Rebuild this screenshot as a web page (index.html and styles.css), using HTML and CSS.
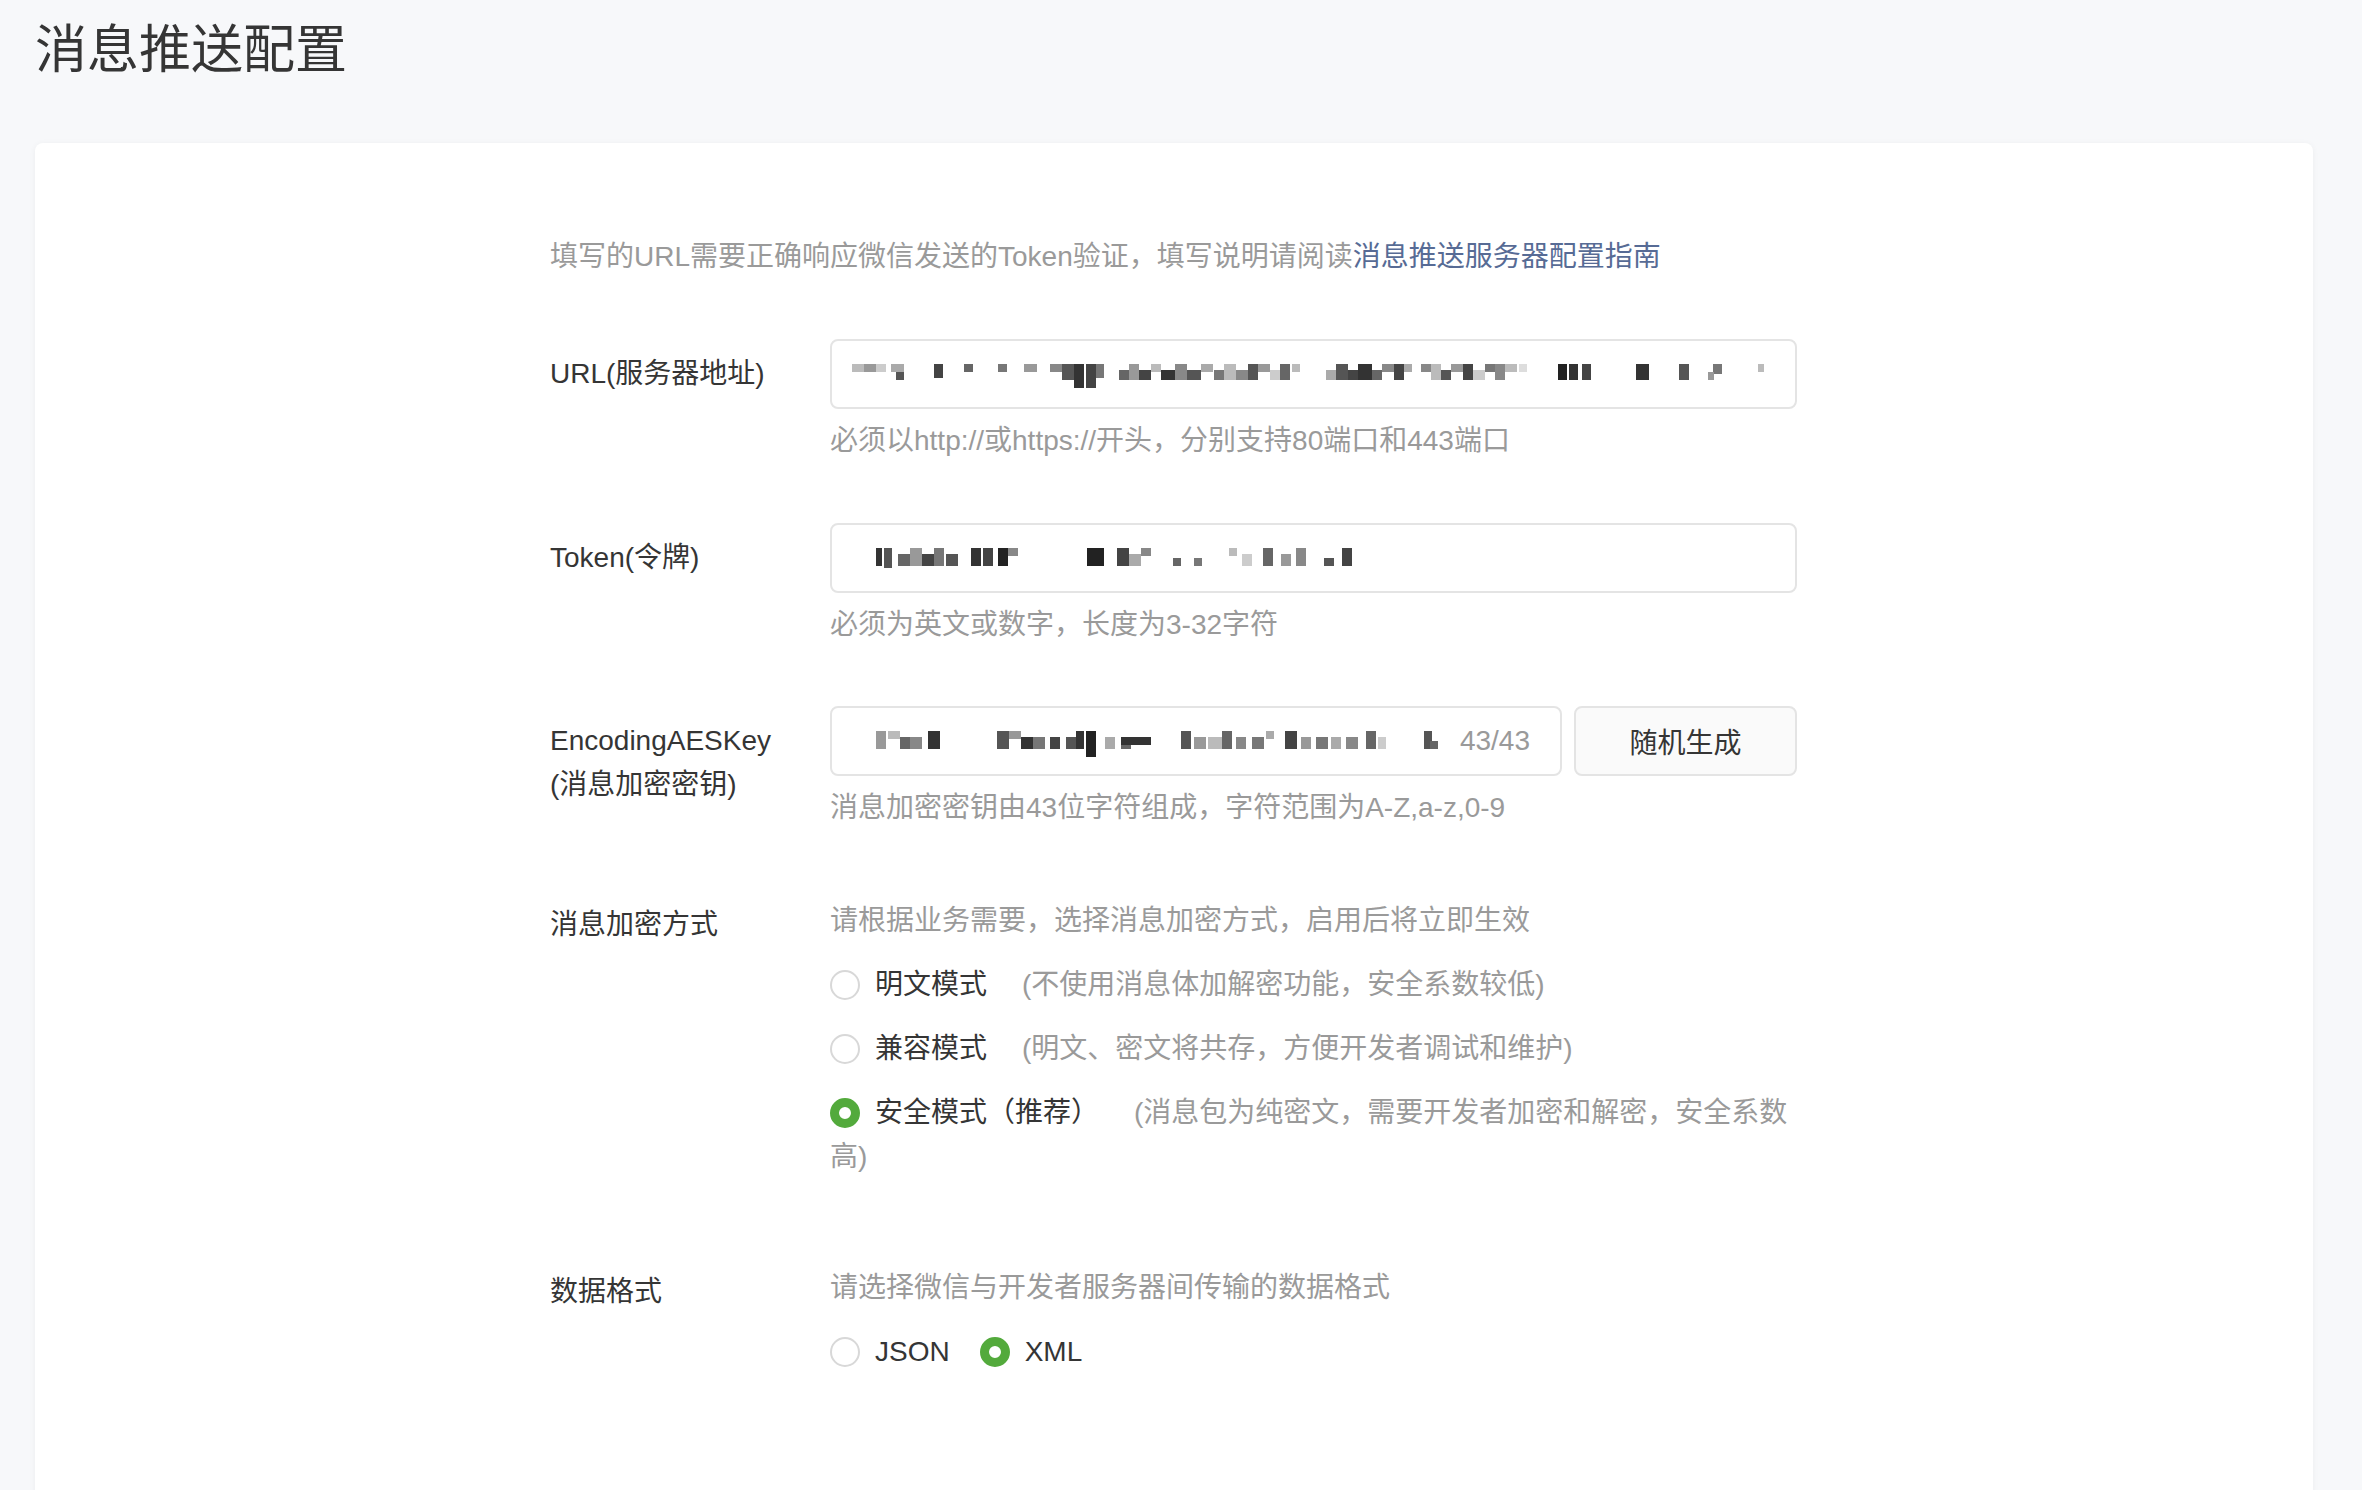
FILE: index.html
```html
<!DOCTYPE html>
<html lang="zh-CN">
<head>
<meta charset="utf-8">
<title>消息推送配置</title>
<link rel="stylesheet" href="styles.css">
</head>
<body>
<div class="page">
  <h1 class="page-title">消息推送配置</h1>
  <div class="card">
    <div class="form">
      <p class="intro">填写的URL需要正确响应微信发送的Token验证，填写说明请阅读<a class="link" href="#">消息推送服务器配置指南</a></p>

      <div class="row row-url">
        <div class="label">URL(服务器地址)</div>
        <div class="field">
          <div class="input">
            <svg class="mosaic mosaic-url" width="913" height="32" viewBox="0 0 913 32">
              <rect x="0" y="6" width="12" height="8" fill="#bbb"/><rect x="12" y="6" width="12" height="8" fill="#999"/><rect x="24" y="6" width="10" height="8" fill="#ccc"/>
              <rect x="39" y="6" width="13" height="8" fill="#aaa"/><rect x="44" y="14" width="8" height="8" fill="#555"/>
              <rect x="82" y="6" width="9" height="14" fill="#444"/><rect x="112" y="6" width="9" height="8" fill="#666"/><rect x="146" y="6" width="9" height="8" fill="#777"/><rect x="172" y="6" width="13" height="8" fill="#999"/>
              <rect x="198" y="6" width="12" height="8" fill="#888"/><rect x="210" y="6" width="12" height="16" fill="#555"/><rect x="222" y="6" width="10" height="24" fill="#333"/><rect x="234" y="6" width="10" height="24" fill="#444"/><rect x="244" y="6" width="8" height="14" fill="#777"/>
              <rect x="267" y="12" width="10" height="10" fill="#666"/><rect x="277" y="6" width="10" height="16" fill="#999"/><rect x="287" y="12" width="12" height="10" fill="#444"/><rect x="299" y="6" width="10" height="8" fill="#bbb"/><rect x="309" y="12" width="14" height="10" fill="#333"/><rect x="323" y="6" width="12" height="16" fill="#888"/><rect x="335" y="12" width="14" height="10" fill="#555"/><rect x="349" y="6" width="12" height="8" fill="#aaa"/>
              <rect x="362" y="12" width="10" height="10" fill="#777"/><rect x="372" y="6" width="12" height="16" fill="#bbb"/><rect x="384" y="12" width="12" height="10" fill="#888"/><rect x="396" y="6" width="10" height="16" fill="#555"/><rect x="406" y="6" width="12" height="8" fill="#999"/><rect x="418" y="12" width="10" height="10" fill="#ccc"/><rect x="428" y="6" width="10" height="16" fill="#666"/><rect x="440" y="6" width="8" height="8" fill="#bbb"/>
              <rect x="474" y="12" width="10" height="10" fill="#aaa"/><rect x="484" y="6" width="12" height="16" fill="#555"/><rect x="496" y="12" width="10" height="10" fill="#444"/><rect x="506" y="6" width="14" height="16" fill="#333"/><rect x="520" y="12" width="10" height="10" fill="#666"/><rect x="530" y="6" width="12" height="8" fill="#888"/><rect x="542" y="6" width="10" height="16" fill="#444"/><rect x="552" y="6" width="8" height="8" fill="#aaa"/>
              <rect x="569" y="6" width="10" height="8" fill="#888"/><rect x="579" y="6" width="10" height="16" fill="#bbb"/><rect x="589" y="12" width="10" height="10" fill="#555"/><rect x="599" y="6" width="12" height="8" fill="#999"/><rect x="611" y="6" width="10" height="16" fill="#444"/><rect x="621" y="12" width="12" height="10" fill="#ccc"/><rect x="633" y="6" width="10" height="8" fill="#777"/><rect x="643" y="6" width="10" height="16" fill="#888"/><rect x="653" y="6" width="12" height="8" fill="#bbb"/><rect x="667" y="6" width="8" height="8" fill="#ddd"/>
              <rect x="706" y="6" width="9" height="16" fill="#222"/><rect x="717" y="6" width="9" height="16" fill="#333"/><rect x="730" y="6" width="9" height="16" fill="#444"/>
              <rect x="784" y="6" width="13" height="16" fill="#333"/><rect x="827" y="6" width="10" height="16" fill="#555"/>
              <rect x="861" y="6" width="9" height="10" fill="#777"/><rect x="856" y="14" width="6" height="8" fill="#999"/><rect x="906" y="6" width="6" height="8" fill="#bbb"/>
            </svg>
          </div>
          <p class="tip">必须以http://或https://开头，分别支持80端口和443端口</p>
        </div>
      </div>

      <div class="row row-token">
        <div class="label">Token(令牌)</div>
        <div class="field">
          <div class="input input-indent">
            <svg class="mosaic" width="484" height="32" viewBox="0 0 484 32">
              <rect x="0" y="6" width="6" height="18" fill="#333"/><rect x="8" y="6" width="8" height="20" fill="#555"/>
              <rect x="22" y="12" width="12" height="12" fill="#666"/><rect x="34" y="6" width="12" height="18" fill="#999"/><rect x="46" y="12" width="12" height="12" fill="#444"/><rect x="58" y="6" width="10" height="18" fill="#777"/><rect x="70" y="12" width="12" height="12" fill="#555"/>
              <rect x="95" y="6" width="10" height="18" fill="#333"/><rect x="107" y="6" width="10" height="18" fill="#444"/><rect x="122" y="6" width="10" height="18" fill="#222"/><rect x="132" y="6" width="10" height="8" fill="#888"/>
              <rect x="211" y="6" width="17" height="18" fill="#222"/>
              <rect x="241" y="6" width="12" height="18" fill="#444"/><rect x="253" y="12" width="12" height="12" fill="#aaa"/><rect x="265" y="6" width="10" height="8" fill="#888"/>
              <rect x="297" y="16" width="8" height="8" fill="#666"/><rect x="318" y="16" width="8" height="8" fill="#777"/>
              <rect x="353" y="6" width="8" height="8" fill="#bbb"/><rect x="366" y="12" width="10" height="12" fill="#ccc"/>
              <rect x="387" y="6" width="10" height="18" fill="#666"/><rect x="405" y="12" width="10" height="12" fill="#999"/><rect x="420" y="6" width="10" height="18" fill="#888"/>
              <rect x="448" y="16" width="10" height="8" fill="#555"/><rect x="466" y="6" width="10" height="18" fill="#444"/>
            </svg>
          </div>
          <p class="tip">必须为英文或数字，长度为3-32字符</p>
        </div>
      </div>

      <div class="row row-aes">
        <div class="label label-two">
          <span class="label-line">EncodingAESKey</span>
          <span class="label-line">(消息加密密钥)</span>
        </div>
        <div class="field">
          <div class="input-group">
            <div class="input input-indent input-counted">
              <svg class="mosaic" width="562" height="32" viewBox="0 0 562 32">
                <rect x="0" y="6" width="10" height="18" fill="#999"/><rect x="12" y="6" width="12" height="8" fill="#bbb"/><rect x="24" y="12" width="10" height="12" fill="#666"/><rect x="34" y="12" width="12" height="12" fill="#888"/><rect x="52" y="6" width="12" height="18" fill="#333"/>
                <rect x="121" y="6" width="12" height="18" fill="#555"/><rect x="133" y="6" width="12" height="8" fill="#999"/><rect x="145" y="12" width="12" height="12" fill="#333"/><rect x="157" y="12" width="12" height="12" fill="#777"/><rect x="174" y="12" width="10" height="12" fill="#444"/><rect x="190" y="12" width="10" height="12" fill="#555"/><rect x="200" y="6" width="8" height="18" fill="#333"/><rect x="210" y="6" width="10" height="26" fill="#222"/>
                <rect x="229" y="12" width="10" height="12" fill="#aaa"/><rect x="245" y="12" width="30" height="8" fill="#333"/><rect x="245" y="20" width="10" height="4" fill="#666"/>
                <rect x="305" y="6" width="10" height="18" fill="#555"/><rect x="318" y="12" width="12" height="12" fill="#999"/><rect x="332" y="12" width="14" height="12" fill="#bbb"/><rect x="346" y="6" width="10" height="18" fill="#666"/><rect x="360" y="12" width="10" height="12" fill="#888"/><rect x="376" y="12" width="12" height="12" fill="#777"/><rect x="390" y="6" width="8" height="8" fill="#aaa"/>
                <rect x="409" y="6" width="12" height="18" fill="#444"/><rect x="425" y="12" width="10" height="12" fill="#999"/><rect x="440" y="12" width="12" height="12" fill="#777"/><rect x="455" y="12" width="10" height="12" fill="#aaa"/><rect x="470" y="12" width="12" height="12" fill="#888"/><rect x="490" y="6" width="10" height="18" fill="#666"/><rect x="502" y="12" width="8" height="12" fill="#ccc"/>
                <rect x="548" y="6" width="8" height="18" fill="#555"/><rect x="554" y="16" width="8" height="8" fill="#666"/>
              </svg>
              <span class="counter">43/43</span>
            </div>
            <button class="btn" type="button">随机生成</button>
          </div>
          <p class="tip">消息加密密钥由43位字符组成，字符范围为A-Z,a-z,0-9</p>
        </div>
      </div>

      <div class="row row-mode">
        <div class="label label-plain">消息加密方式</div>
        <div class="field">
          <p class="hint">请根据业务需要，选择消息加密方式，启用后将立即生效</p>
          <div class="radio-item"><span class="radio"></span><span class="radio-text">明文模式</span><span class="radio-desc">(不使用消息体加解密功能，安全系数较低)</span></div>
          <div class="radio-item"><span class="radio"></span><span class="radio-text">兼容模式</span><span class="radio-desc">(明文、密文将共存，方便开发者调试和维护)</span></div>
          <div class="radio-item"><span class="radio is-checked"></span><span class="radio-text">安全模式（推荐）</span><span class="radio-desc">(消息包为纯密文，需要开发者加密和解密，安全系数高)</span></div>
        </div>
      </div>

      <div class="row row-format">
        <div class="label label-plain">数据格式</div>
        <div class="field">
          <p class="hint">请选择微信与开发者服务器间传输的数据格式</p>
          <div class="radio-item">
            <span class="radio-inline"><span class="radio"></span><span class="radio-text">JSON</span></span><span class="radio-inline"><span class="radio is-checked"></span><span class="radio-text">XML</span></span>
          </div>
        </div>
      </div>
    </div>
  </div>
</div>
</body>
</html>
```

FILE: styles.css
```css
html, body {
  margin: 0;
  padding: 0;
}

body {
  background: #f7f8fa;
  font-family: "Liberation Sans", "Noto Sans CJK SC", sans-serif;
  color: #353535;
}

.page {
  padding: 0 49px 0 35px;
}

.page-title {
  margin: 0;
  padding-top: 10px;
  font-family: "Noto Sans CJK SC", sans-serif;
  font-size: 52px;
  line-height: 72px;
  font-weight: 400;
  color: #353535;
}

.card {
  margin-top: 61px;
  min-height: 1400px;
  background: #ffffff;
  border-radius: 8px;
  box-shadow: 0 1px 6px rgba(0, 0, 0, 0.05);
  padding: 92px 0 60px 515px;
  box-sizing: border-box;
}

.form {
  width: 1247px;
  font-size: 28px;
  line-height: 44px;
}

.intro {
  margin: 0 0 60px;
  color: #9a9a9a;
}

.link {
  color: #576b95;
  text-decoration: none;
}

.row {
  display: flex;
  align-items: flex-start;
}

.row-url {
  margin-bottom: 60px;
}

.row-token {
  margin-bottom: 59px;
}

.row-aes {
  margin-bottom: 69px;
}

.row-mode {
  margin-bottom: 87px;
}

.label {
  width: 280px;
  flex: none;
  padding-top: 13px;
  color: #353535;
}

.label-two {
  display: flex;
  flex-direction: column;
}

.label-line {
  display: block;
  height: 44px;
}

.label-plain {
  padding-top: 4px;
}

.field {
  flex: 1;
  min-width: 0;
}

.input {
  height: 70px;
  box-sizing: border-box;
  border: 2px solid #e4e4e4;
  border-radius: 8px;
  background: #fff;
  display: flex;
  align-items: center;
  padding: 0 20px;
  overflow: hidden;
}

.input-indent {
  padding-left: 44px;
}

.mosaic {
  display: block;
  flex: none;
}

.input-group {
  display: flex;
  gap: 12px;
}

.input-counted {
  flex: 1;
  justify-content: space-between;
  padding-right: 30px;
}

.counter {
  color: #9a9a9a;
  flex: none;
}

.btn {
  width: 223px;
  height: 70px;
  flex: none;
  box-sizing: border-box;
  border: 2px solid #e4e4e4;
  border-radius: 8px;
  background: #fafafa;
  color: #353535;
  font-family: inherit;
  font-size: 28px;
  padding: 0;
}

.tip {
  margin: 10px 0 0;
  color: #9a9a9a;
}

.hint {
  margin: 0;
  color: #9a9a9a;
}

.radio-item {
  margin-top: 20px;
}

.radio {
  display: inline-block;
  width: 30px;
  height: 30px;
  box-sizing: border-box;
  border: 2px solid #d8d8d8;
  border-radius: 50%;
  background: #fff;
  vertical-align: middle;
  margin-right: 15px;
  position: relative;
  top: -2px;
}

.radio.is-checked {
  border: 9px solid #53aa3c;
}

.radio-text {
  color: #353535;
}

.radio-desc {
  color: #9a9a9a;
  margin-left: 35px;
}

.radio-inline {
  display: inline-block;
  margin-right: 30px;
}
```
